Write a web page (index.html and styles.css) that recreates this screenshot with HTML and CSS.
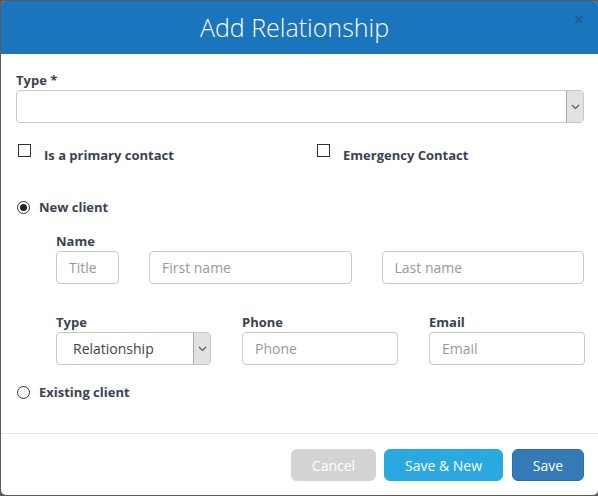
FILE: index.html
```html
<!DOCTYPE html>
<html>
<head>
<meta charset="utf-8">
<link rel="stylesheet" href="styles.css">
</head>
<body>
<div class="modal">
  <div class="header">
    <h1 class="title">Add Relationship</h1>
    <span class="close">&times;</span>
  </div>
  <div class="body">
    <div class="label">Type *</div>
    <div class="select wide"><span class="sel-text"></span><span class="arrow"><svg width="9" height="6" viewBox="0 0 9 6"><path d="M1 1 L4.5 4.5 L8 1" fill="none" stroke="#555" stroke-width="1.1"/></svg></span></div>
    <div class="checks">
      <div class="check"><span class="box"></span><span class="clabel">Is a primary contact</span></div>
      <div class="check"><span class="box"></span><span class="clabel">Emergency Contact</span></div>
    </div>
    <div class="radio first"><span class="circle checked"></span><span class="rlabel">New client</span></div>
    <div class="indent">
      <div class="label">Name</div>
      <div class="name-row">
        <div class="input title-in">Title</div>
        <div class="input">First name</div>
        <div class="input">Last name</div>
      </div>
      <div class="grid3">
        <div class="field">
          <div class="label">Type</div>
          <div class="select"><span class="sel-text">Relationship</span><span class="arrow"><svg width="9" height="6" viewBox="0 0 9 6"><path d="M1 1 L4.5 4.5 L8 1" fill="none" stroke="#555" stroke-width="1.1"/></svg></span></div>
        </div>
        <div class="field">
          <div class="label">Phone</div>
          <div class="input">Phone</div>
        </div>
        <div class="field">
          <div class="label">Email</div>
          <div class="input">Email</div>
        </div>
      </div>
    </div>
    <div class="radio second"><span class="circle"></span><span class="rlabel">Existing client</span></div>
  </div>
  <div class="footer">
    <button class="btn cancel">Cancel</button>
    <button class="btn savenew">Save &amp; New</button>
    <button class="btn save">Save</button>
  </div>
</div>
</body>
</html>
```

FILE: styles.css
```css
html, body {
  margin: 0;
  padding: 0;
  background: #5b5b5b;
  width: 598px;
  height: 496px;
  overflow: hidden;
  font-family: "Open Sans", "Liberation Sans", sans-serif;
}
.modal {
  margin: 1px 0 0 1px;
  width: 597px;
  height: 494px;
  background: #fff;
  border-radius: 5px;
  overflow: hidden;
  display: flex;
  flex-direction: column;
}
.header {
  position: relative;
  height: 53px;
  background: #1b75bc;
  display: flex;
  align-items: center;
  justify-content: center;
}
.title {
  margin: 0 10px 0 0;
  font-size: 25px;
  font-weight: 300;
  color: #fff;
  line-height: 1;
}
.close {
  position: absolute;
  right: 14px;
  top: 8px;
  font-size: 18px;
  line-height: 20px;
  color: #1a5f95;
  font-weight: 600;
}
.body {
  padding: 17px 14px 0 15px;
  flex: 1;
}
.label {
  font-size: 13px;
  font-weight: 700;
  color: #3b4250;
  line-height: 18px;
  margin-bottom: 1px;
}
.select {
  box-sizing: border-box;
  height: 33px;
  border: 1px solid #c8c8c8;
  border-radius: 4px;
  display: flex;
  align-items: stretch;
  overflow: hidden;
}
.select.wide { width: 568px; }
.sel-text {
  flex: 1;
  font-size: 14px;
  color: #444;
  padding-left: 16px;
  line-height: 31px;
}
.arrow {
  width: 16px;
  background: #e2e2e2;
  border-left: 1px solid #a9a9a9;
  display: flex;
  align-items: center;
  justify-content: center;
}
.checks {
  display: flex;
  margin-top: 21px;
}
.check {
  display: flex;
  align-items: flex-start;
  width: 299px;
  flex: none;
}
.box {
  box-sizing: border-box;
  width: 13px;
  height: 13px;
  border: 1px solid #333;
  margin-left: 2px;
  flex: none;
}
.clabel {
  margin-left: 13px;
  font-size: 13px;
  font-weight: 700;
  color: #3b4250;
  line-height: 18px;
  margin-top: 2px;
}
.radio {
  display: flex;
  align-items: center;
}
.radio.first { margin-top: 34px; }
.radio.second { margin-top: 18px; }
.circle {
  box-sizing: border-box;
  width: 13px;
  height: 13px;
  border: 1px solid #333;
  border-radius: 50%;
  margin-left: 1px;
  display: flex;
  align-items: center;
  justify-content: center;
  flex: none;
}
.circle.checked::after {
  content: "";
  width: 7px;
  height: 7px;
  border-radius: 50%;
  background: #222;
}
.rlabel {
  margin-left: 9px;
  font-size: 13px;
  font-weight: 700;
  color: #3b4250;
  line-height: 18px;
}
.indent {
  margin-left: 40px;
  width: 528px;
  margin-top: 16px;
}
.input {
  box-sizing: border-box;
  height: 33px;
  border: 1px solid #c8c8c8;
  border-radius: 4px;
  font-size: 14px;
  color: #999;
  padding-left: 12px;
  line-height: 31px;
}
.name-row {
  display: flex;
  gap: 30px;
}
.name-row .input { flex: 1; }
.name-row .title-in { flex: none; width: 63px; }
.grid3 {
  display: grid;
  grid-template-columns: 155px 156px 156px;
  column-gap: 31px;
  margin-top: 29px;
}
.footer {
  border-top: 1px solid #e5e5e5;
  height: 62px;
  flex: none;
  display: flex;
  justify-content: flex-end;
  align-items: flex-start;
  gap: 8px;
  padding: 15px 14px 0 0;
  box-sizing: border-box;
}
.btn {
  height: 32px;
  border-radius: 6px;
  border: 1px solid transparent;
  font-family: "Open Sans", "Liberation Sans", sans-serif;
  font-size: 14px;
  color: #fff;
  padding: 0;
}
.cancel { width: 85px; background: #d3d3d3; border-color: #d3d3d3; }
.savenew { width: 119px; background: #29a9e0; border-color: #29a9e0; margin-right: 1px; }
.save { width: 72px; background: #337ab7; border-color: #2e6da4; }
```
